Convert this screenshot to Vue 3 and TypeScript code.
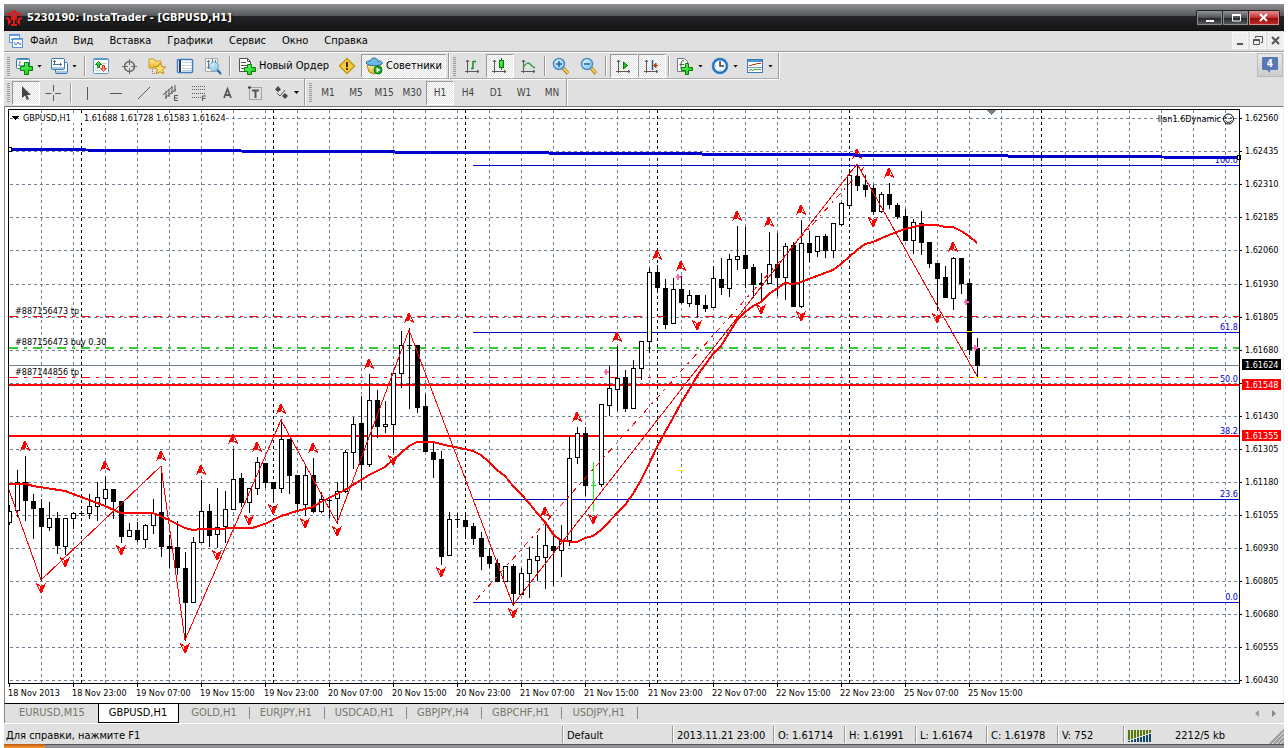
<script setup lang="ts">
type Kind = 'w' | 'b' | 'd'
type Candle = [high: number, low: number, top: number, bottom: number, kind: Kind]
interface Tool {
  icon?: string
  text?: string
  label: string
  pressed?: boolean
  menu?: boolean
  sep?: 'narrow' | 'wide'
}

const menus = ['Файл', 'Вид', 'Вставка', 'Графики', 'Сервис', 'Окно', 'Справка']

const mainTools: Tool[] = [
  { icon: 'new-chart', label: 'Новый график', menu: true },
  { icon: 'profiles', label: 'Профили', menu: true },
  { label: '', sep: 'narrow' },
  { icon: 'market', label: 'Обзор рынка' },
  { icon: 'target', label: 'Окно данных' },
  { icon: 'folder', label: 'Навигатор' },
  { icon: 'terminal', label: 'Терминал' },
  { icon: 'tester', label: 'Тестер стратегий' },
  { label: '', sep: 'wide' },
  { icon: 'order', text: 'Новый Ордер', label: 'Новый Ордер' },
  { icon: 'alert', label: 'MetaEditor' },
  { icon: 'expert', text: 'Советники', label: 'Советники', pressed: true },
]
const chartTools: Tool[] = [
  { icon: 'bars', label: 'Бары' },
  { icon: 'candles', label: 'Японские свечи', pressed: true },
  { icon: 'line', label: 'Линия' },
  { label: '', sep: 'narrow' },
  { icon: 'zoom-in', label: 'Увеличить' },
  { icon: 'zoom-out', label: 'Уменьшить' },
  { label: '', sep: 'wide' },
  { icon: 'scroll', label: 'Автопрокрутка', pressed: true },
  { icon: 'shift', label: 'Сдвиг графика', pressed: true },
  { label: '', sep: 'wide' },
  { icon: 'indicator', label: 'Индикаторы', menu: true },
  { icon: 'clock', label: 'Периоды', menu: true },
  { icon: 'template', label: 'Шаблоны', menu: true },
]
const drawTools: Tool[] = [
  { icon: 'cursor', label: 'Курсор', pressed: true },
  { icon: 'cross', label: 'Перекрестие' },
  { label: '', sep: 'narrow' },
  { icon: 'vline', label: 'Вертикальная линия' },
  { icon: 'hline', label: 'Горизонтальная линия' },
  { icon: 'trend', label: 'Трендовая линия' },
  { icon: 'channel', label: 'Канал' },
  { icon: 'fibo', label: 'Фибоначчи' },
  { icon: 'text', label: 'Текст' },
  { icon: 'label', label: 'Метка' },
  { icon: 'arrows', label: 'Стрелки', menu: true },
]
const frames = ['M1', 'M5', 'M15', 'M30', 'H1', 'H4', 'D1', 'W1', 'MN']
const tabs = ['EURUSD,M15', 'GBPUSD,H1', 'GOLD,H1', 'EURJPY,H1', 'USDCAD,H1', 'GBPJPY,H4', 'GBPCHF,H1', 'USDJPY,H1']

const candles: Candle[] = [
  [505, 524, 511, 522, 'w'], [470, 516, 482, 510, 'w'], [456, 520, 482, 500, 'b'], [494, 538, 501, 508, 'b'],
  [499, 580, 508, 526, 'b'], [502, 530, 518, 527, 'w'], [512, 553, 518, 545, 'b'], [518, 554, 518, 546, 'w'],
  [512, 528, 513, 518, 'w'], [511, 515, 513, 513, 'd'], [494, 518, 506, 513, 'w'], [482, 520, 497, 506, 'w'],
  [476, 506, 489, 498, 'w'], [489, 518, 489, 501, 'b'], [501, 542, 501, 536, 'b'], [523, 536, 530, 536, 'w'],
  [522, 541, 530, 539, 'b'], [524, 547, 525, 539, 'w'], [499, 533, 513, 525, 'w'], [466, 556, 512, 546, 'b'],
  [535, 567, 546, 548, 'b'], [521, 574, 547, 567, 'b'], [552, 640, 568, 602, 'b'], [537, 602, 542, 602, 'w'],
  [480, 542, 511, 542, 'w'], [504, 546, 511, 535, 'b'], [488, 547, 527, 534, 'w'], [491, 542, 509, 526, 'w'],
  [449, 509, 479, 509, 'w'], [473, 506, 478, 502, 'b'], [488, 512, 488, 502, 'w'], [457, 494, 462, 488, 'w'],
  [463, 487, 463, 482, 'b'], [482, 501, 482, 488, 'b'], [419, 492, 439, 488, 'w'], [439, 493, 439, 475, 'b'],
  [475, 511, 475, 503, 'b'], [466, 515, 475, 504, 'w'], [458, 512, 475, 511, 'b'], [492, 512, 499, 511, 'w'],
  [497, 517, 500, 500, 'd'], [482, 523, 491, 498, 'w'], [450, 492, 452, 491, 'w'], [417, 468, 424, 452, 'w'],
  [396, 489, 423, 464, 'b'], [374, 466, 400, 464, 'w'], [390, 437, 400, 426, 'b'], [401, 432, 424, 426, 'w'],
  [370, 452, 373, 424, 'w'], [331, 387, 345, 373, 'w'], [328, 408, 345, 345, 'd'], [345, 412, 345, 407, 'b'],
  [394, 451, 406, 451, 'b'], [442, 477, 452, 459, 'b'], [451, 564, 459, 556, 'b'], [512, 555, 519, 555, 'w'],
  [513, 527, 519, 519, 'd'], [512, 538, 520, 526, 'b'], [523, 544, 526, 538, 'b'], [532, 569, 538, 556, 'b'],
  [548, 567, 556, 563, 'b'], [559, 581, 563, 581, 'b'], [566, 581, 566, 581, 'w'], [564, 605, 566, 593, 'b'],
  [568, 594, 573, 594, 'w'], [547, 597, 559, 573, 'w'], [535, 580, 556, 560, 'w'], [522, 588, 545, 557, 'w'],
  [534, 585, 546, 550, 'b'], [525, 576, 540, 550, 'w'], [436, 545, 458, 540, 'w'], [427, 463, 433, 457, 'w'],
  [427, 495, 433, 485, 'b'], [485, 485, 485, 485, 'd'], [404, 486, 404, 484, 'w'], [366, 415, 388, 405, 'w'],
  [346, 410, 378, 389, 'w'], [370, 411, 377, 408, 'b'], [360, 408, 368, 408, 'w'], [341, 379, 341, 368, 'w'],
  [268, 352, 272, 341, 'w'], [265, 292, 272, 287, 'b'], [279, 328, 288, 324, 'b'], [278, 323, 289, 323, 'w'],
  [276, 303, 289, 302, 'b'], [290, 306, 295, 303, 'w'], [295, 317, 295, 304, 'b'], [295, 311, 305, 308, 'b'],
  [266, 307, 278, 307, 'w'], [258, 294, 279, 287, 'b'], [254, 296, 259, 288, 'w'], [226, 269, 256, 259, 'w'],
  [227, 287, 255, 268, 'b'], [264, 297, 267, 284, 'b'], [273, 301, 283, 284, 'b'], [232, 283, 264, 283, 'w'],
  [233, 295, 264, 277, 'b'], [243, 299, 246, 277, 'w'], [242, 306, 245, 306, 'b'], [220, 307, 243, 306, 'w'],
  [231, 261, 243, 252, 'b'], [236, 256, 236, 251, 'w'], [234, 257, 236, 250, 'b'], [223, 257, 223, 250, 'w'],
  [202, 225, 203, 224, 'w'], [169, 206, 175, 205, 'w'], [164, 190, 176, 185, 'b'], [175, 196, 185, 189, 'b'],
  [185, 214, 188, 211, 'b'], [192, 212, 194, 211, 'w'], [183, 208, 194, 204, 'b'], [203, 218, 205, 216, 'b'],
  [209, 240, 216, 240, 'b'], [219, 253, 222, 240, 'w'], [211, 254, 223, 242, 'b'], [242, 267, 242, 263, 'b'],
  [263, 310, 263, 278, 'b'], [266, 297, 277, 297, 'b'], [257, 309, 258, 298, 'w'], [258, 293, 258, 283, 'b'],
  [279, 354, 283, 349, 'b'], [338, 376, 348, 365, 'b'],
]

const average =
  '9,484 27,484 33,486 65,491 81,497 105,506 121,513 153,513 169,520 185,528 193,530 201,529 252,528 265,524 281,516 297,511 313,507 321,502 337,494 345,490 369,475 385,467 401,453 409,446 417,442 433,442 449,446 465,449 473,451 481,455 489,462 497,470 505,476 513,486 521,494 529,503 537,513 545,522 553,534 561,541 577,542 585,538 593,536 601,530 625,505 633,494 641,480 649,464 657,447 665,432 673,418 681,403 689,390 697,376 705,365 713,354 721,346 729,333 737,320 745,312 753,306 761,302 769,294 785,283 793,284 801,282 817,276 833,270 841,264 857,250 865,244 873,242 889,235 905,229 921,225 937,225 945,227 953,227 961,231 969,236 977,243'
const zigzag = '9,490 41,580 161,466 185,640 281,420 337,523 409,330 513,605 857,164 977,376'

const upMarks: [number, number][] = [
  [25, 446], [105, 466], [161, 456], [201, 470], [233, 439], [257, 447], [281, 409], [313, 448], [369, 364],
  [409, 318], [545, 512], [577, 417], [617, 337], [657, 255], [681, 266], [737, 216], [769, 222], [801, 210],
  [857, 154], [889, 173], [953, 247],
]
const downMarks: [number, number][] = [
  [41, 588], [65, 562], [121, 550], [185, 648], [217, 555], [249, 520], [273, 509], [305, 523], [337, 531],
  [393, 460], [441, 572], [513, 613], [593, 519], [697, 325], [761, 309], [801, 316], [873, 222], [937, 318],
]
const trades: [number, number][] = [[606, 372], [678, 277], [966, 302], [975, 348]]

const gridX = Array.from({ length: 38 }, (_, i) => 41 + 32 * i)
const days = [81, 273, 465, 657, 849, 1041]
const prices: [number, string][] = [
  [118, '1.62560'], [151, '1.62435'], [184, '1.62310'], [217, '1.62185'], [250, '1.62060'], [284, '1.61930'],
  [317, '1.61805'], [350, '1.61680'], [383, ''], [416, '1.61430'], [449, '1.61305'], [482, '1.61180'],
  [515, '1.61055'], [548, '1.60930'], [581, '1.60805'], [614, '1.60680'], [647, '1.60555'], [680, '1.60430'],
]
const times = [
  '18 Nov 2013', '18 Nov 23:00', '19 Nov 07:00', '19 Nov 15:00', '19 Nov 23:00', '20 Nov 07:00', '20 Nov 15:00',
  '20 Nov 23:00', '21 Nov 07:00', '21 Nov 15:00', '21 Nov 23:00', '22 Nov 07:00', '22 Nov 15:00', '22 Nov 23:00',
  '25 Nov 07:00', '25 Nov 15:00',
]
const fibs: [number, string][] = [[165, '100.0'], [332, '61.8'], [384, '50.0'], [436, '38.2'], [499, '23.6'], [602, '0.0']]
const orders: [number, string][] = [[314, '#887156473 tp'], [345, '#887156473 buy 0.30'], [375, '#887144856 tp']]
const quotes = ['O: 1.61714', 'H: 1.61991', 'L: 1.61674', 'C: 1.61978']
</script>

<template>
  <div class="window">
    <svg class="defs" aria-hidden="true">
      <defs>
        <linearGradient id="lens" x1="0" y1="0" x2="1" y2="1"><stop offset="0" stop-color="#eefaff" /><stop offset="1" stop-color="#74c2ee" /></linearGradient>
        <linearGradient id="leaf" x1="0" y1="0" x2="1" y2="1"><stop offset="0" stop-color="#6dff6d" /><stop offset="1" stop-color="#10c010" /></linearGradient>
        <linearGradient id="gold" x1="0" y1="0" x2="0" y2="1"><stop offset="0" stop-color="#fff0a0" /><stop offset="1" stop-color="#e8b020" /></linearGradient>
      </defs>
      <symbol id="new-chart" viewBox="0 0 18 18">
        <rect x="1.500" y="1.500" width="13" height="10" rx="1" fill="#fff" stroke="#3c78b4" />
        <path d="M2 2.500h12" stroke="#5a9ad4" /><path d="M4.500 4v5M3 8.500h6M4 5.500h2" stroke="#6a9cc8" fill="none" />
        <path d="M9.500 5.500h4v4h4v4h-4v4h-4v-4h-4v-4h4z" fill="url(#leaf)" stroke="#087808" />
      </symbol>
      <symbol id="profiles" viewBox="0 0 18 18">
        <rect x="5.500" y="5.500" width="12" height="11" rx="1" fill="#fff" stroke="#3c78b4" /><path d="M6 15h11" stroke="#a6c8e6" stroke-width="2" />
        <rect x="1.500" y="1.500" width="13" height="11" rx="1" fill="#fff" stroke="#3c78b4" /><path d="M2 11h12" stroke="#a6c8e6" stroke-width="2" />
        <path d="M4.500 3v5M3 4.500h3M3 7.500h9M10.500 6v3" stroke="#4d7095" fill="none" />
      </symbol>
      <symbol id="market" viewBox="0 0 18 18">
        <rect x="1.500" y="1.500" width="15" height="15" rx="1" fill="#fff" stroke="#5a9ad4" /><path d="M2 2.500h14" stroke="#5a9ad4" />
        <path d="M3 11.500h3M10 6.500h5M3 13.500h5" stroke="#c8d4e0" />
        <path d="M6.500 4.500l3 3h-2v3h-2v-3h-2z" fill="url(#leaf)" stroke="#087808" />
        <path d="M11.500 14.500l3-3h-2v-3h-2v3h-2z" fill="#f8a080" stroke="#c83c18" />
      </symbol>
      <symbol id="target" viewBox="0 0 18 18">
        <circle cx="9.500" cy="9.500" r="5" fill="none" stroke="#686868" stroke-width="1.500" /><path d="M9.500 2v6M9.500 11v6M2 9.500h6M11 9.500h6" stroke="#686868" />
      </symbol>
      <symbol id="folder" viewBox="0 0 18 18">
        <path d="M1 2h5l1 2h6v7H1z" fill="url(#gold)" stroke="#c89a28" />
        <path d="M4.500 12v4.500H8" fill="none" stroke="#777" stroke-dasharray="1 1" />
        <path d="M12 6l1.700 3.500 4 .5-3 2.600.9 4.200L12 14.700l-3.600 2.100.9-4.200-3-2.600 4-.5z" fill="#ffe070" stroke="#c08818" />
      </symbol>
      <symbol id="terminal" viewBox="0 0 18 18">
        <rect x="1.500" y="2.500" width="15" height="13" rx="1" fill="#fff" stroke="#3c7cc0" stroke-width="1.500" /><path d="M4 3v12" stroke="#2a3a50" stroke-width="2" />
        <path d="M6 5.500h9M6 8.500h9M6 11.500h9" stroke="#c0cfe0" /><path d="M6 13.500h10" stroke="#a9cef0" />
      </symbol>
      <symbol id="tester" viewBox="0 0 18 18">
        <path d="M1.500 1.500h12v13h-12z" fill="#f4f4ee" stroke="#aaa" /><path d="M4.500 3v9M8.500 2v5M11.500 3v6M3 10.500h8M3 4.500h3" stroke="#6a7888" />
        <circle cx="10" cy="9.500" r="4.500" fill="url(#lens)" fill-opacity=".85" stroke="#6ea0c8" /><path d="M13.500 13l3.500 4" stroke="#2468b0" stroke-width="2" />
      </symbol>
      <symbol id="order" viewBox="0 0 18 18">
        <path d="M1.500 1.500h8l3 3v10h-11z" fill="#fff" stroke="#555" /><path d="M9.500 1.500v3h3M3 5.500h5M3 8.500h7M3 11.500h4" stroke="#555" fill="none" />
        <path d="M9.500 7.500h4v3h4v4h-4v3h-4v-3h-3v-4h3z" fill="url(#leaf)" stroke="#087808" />
      </symbol>
      <symbol id="alert" viewBox="0 0 18 18">
        <path d="M9 1.500L16.500 9 9 16.500 1.500 9z" fill="#f8cc38" stroke="#c49818" stroke-width="1.500" /><path d="M9 5v5M9 11v2" stroke="#403000" stroke-width="2" />
      </symbol>
      <symbol id="expert" viewBox="0 0 18 18">
        <path d="M2 8h13l-1 6-5 3-5-2z" fill="url(#gold)" stroke="#b88a18" />
        <path d="M1 6c0-2 3-2 4-2 1-4 7-4 8 0 3 0 5 1 4 3-3 2-13 3-16-1z" fill="#6ab8e6" stroke="#286c9c" />
        <circle cx="13" cy="13" r="4" fill="#1aae20" stroke="#087808" /><path d="M11.500 10.500l4 2.500-4 2.500z" fill="#fff" />
      </symbol>
      <symbol id="bars" viewBox="0 0 18 18">
        <path d="M4.500 3v13M2 14.500h14M3 5l1.500-2L6 5M14 13l2 1.500-2 1.500" fill="none" stroke="#585858" /><path d="M10 12V4M8 11.500h2M10 4.500h3" stroke="#168c16" stroke-width="1.500" />
      </symbol>
      <symbol id="candles" viewBox="0 0 18 18">
        <path d="M3.500 3v13M1 14.500h14M2 5l1.500-2L5 5M13 13l2 1.500-2 1.500" fill="none" stroke="#585858" /><path d="M10.500 1v12" stroke="#087808" /><rect x="8.500" y="3.500" width="4" height="7" fill="url(#leaf)" stroke="#087808" />
      </symbol>
      <symbol id="line" viewBox="0 0 18 18">
        <path d="M4.500 3v13M2 14.500h14M3 5l1.500-2L6 5M14 13l2 1.500-2 1.500" fill="none" stroke="#585858" /><path d="M4 11c4-7 6-5 8-3s3 2 4 3" fill="none" stroke="#30a040" stroke-width="1.500" />
      </symbol>
      <symbol id="zoom-in" viewBox="0 0 18 18">
        <path d="M11 11l5 5.500" stroke="#a87810" stroke-width="3.500" /><path d="M11 11l5 5" stroke="#f4d060" stroke-width="2" />
        <circle cx="7" cy="7" r="5.500" fill="url(#lens)" stroke="#4a8cc8" stroke-width="1.500" /><path d="M4 7h6M7 4v6" stroke="#286098" stroke-width="1.500" />
      </symbol>
      <symbol id="zoom-out" viewBox="0 0 18 18">
        <path d="M11 11l5 5.500" stroke="#a87810" stroke-width="3.500" /><path d="M11 11l5 5" stroke="#f4d060" stroke-width="2" />
        <circle cx="7" cy="7" r="5.500" fill="url(#lens)" stroke="#4a8cc8" stroke-width="1.500" /><path d="M4 7h6" stroke="#286098" stroke-width="1.500" />
      </symbol>
      <symbol id="scroll" viewBox="0 0 18 18">
        <path d="M3.500 3v13M1 14.500h14M2 5l1.500-2L5 5M13 13l2 1.500-2 1.500" fill="none" stroke="#585858" /><path d="M8.500 5l4 3.500-4 3.500z" fill="#28c028" stroke="#087808" />
      </symbol>
      <symbol id="shift" viewBox="0 0 18 18">
        <path d="M3.500 3v13M1 14.500h14M2 5l1.500-2L5 5M13 13l2 1.500-2 1.500" fill="none" stroke="#585858" /><path d="M9.500 3v10" stroke="#1c5c94" stroke-width="1.500" /><path d="M15 8.500h-4M13 6l-2.500 2.500L13 11z" stroke="#b83c10" fill="#d85020" />
      </symbol>
      <symbol id="indicator" viewBox="0 0 18 18">
        <path d="M1.500 1.500h7l3 3v10h-10z" fill="#fff" stroke="#777" /><path d="M8 4c-3-1-3 1-3 8M3.500 7.500H8" stroke="#555" fill="none" />
        <path d="M9.500 6.500h3v4h4v3h-4v4h-3v-4h-4v-3h4z" fill="url(#leaf)" stroke="#087808" />
      </symbol>
      <symbol id="clock" viewBox="0 0 18 18">
        <circle cx="9" cy="9" r="7" fill="#f4faff" stroke="#1c64b4" stroke-width="2.500" /><circle cx="9" cy="9" r="7.500" fill="none" stroke="#4090e0" /><path d="M9 4v5h4" fill="none" stroke="#345" stroke-width="1.500" /><path d="M9 13v1M4 9h1" stroke="#789" />
      </symbol>
      <symbol id="template" viewBox="0 0 18 18">
        <rect x="1.500" y="2.500" width="15" height="13" fill="#fff" stroke="#3c78b4" /><path d="M2 4h14" stroke="#4c94d8" stroke-width="2" /><path d="M2 10.500h14" stroke="#7ca8d0" />
        <path d="M3 8.500h2l2-1h2l2-1h4" stroke="#b03820" fill="none" /><path d="M3 13.500l2-1 2 1 2-1.500 2 1 2-1 2 1" stroke="#28a038" fill="none" />
      </symbol>
      <symbol id="cursor" viewBox="0 0 18 18"><path d="M5 2v12l3-2.500 2 4.500 2-1-2-4h4z" fill="#444" /></symbol>
      <symbol id="cross" viewBox="0 0 18 18"><path d="M8.500 1v6.500M8.500 11v6M.5 9.500h6M10 9.500h6" stroke="#585858" /></symbol>
      <symbol id="vline" viewBox="0 0 18 18"><path d="M9.500 3v13" stroke="#585858" /></symbol>
      <symbol id="hline" viewBox="0 0 18 18"><path d="M4 9.500h12" stroke="#585858" /></symbol>
      <symbol id="trend" viewBox="0 0 18 18"><path d="M4 15L16 3" stroke="#585858" /></symbol>
      <symbol id="channel" viewBox="0 0 18 18"><path d="M1 11l9-8M3 14l11-9M4 7v8M7 5v8M10 2v8M13 1v7" stroke="#555" /><path d="M16 11.500h-3.500v5H16M12 14h3.500" fill="none" stroke="#555" /></symbol>
      <symbol id="fibo" viewBox="0 0 18 18"><path d="M2 2.500h13M2 5.500h13M2 9.500h13M2 13.500h9" stroke="#555" stroke-dasharray="1 1" /><path d="M12.500 17v-5H16M12 14.500h3.500" fill="none" stroke="#555" /></symbol>
      <symbol id="text" viewBox="0 0 18 18"><path d="M6 14l3.500-9 3.500 9M7 11h5" fill="none" stroke="#585858" stroke-width="1.800" /></symbol>
      <symbol id="label" viewBox="0 0 18 18"><rect x="3.500" y="3.500" width="12" height="12" fill="none" stroke="#666" stroke-dasharray="1 1" /><path d="M2 3.500h3" stroke="#444" stroke-width="2" /><path d="M6 6.500h7M9.500 7v7" stroke="#555" stroke-width="2" /></symbol>
      <symbol id="arrows" viewBox="0 0 18 18"><path d="M6 2l3 3.500L6 8 3 5.500z" fill="#484848" /><path d="M5 9l3 3 5-6" fill="none" stroke="#555" /><path d="M13 9l3 3-3 3-3-3z" fill="#484848" /></symbol>
      <symbol id="mark" viewBox="-6 -6 12 12" overflow="visible"><path d="M-1-5H1V2L-2 3l-3 2 2-5z" fill="red" /><path d="M0-5L5 5M0 1l5 4" stroke="red" fill="none" /></symbol>
    </svg>

    <header class="title-bar">
      <svg class="brand" viewBox="0 0 18 18" width="18" height="18" aria-hidden="true">
        <circle cx="9" cy="3" r="2" fill="#e01818" />
        <path d="M9 6v11M6 16h6M2 6l3-2 2 3v4M16 6l-3-2-2 3v4M1 9l3 1v4l2-2M17 9l-3 1v4l-2-2" stroke="#e01818" stroke-width="2" fill="none" />
      </svg>
      <h1>5230190: InstaTrader - [GBPUSD,H1]</h1>
      <div class="win-buttons">
        <button type="button" aria-label="Свернуть"><svg width="12" height="12"><path d="M2 9h8" stroke="#fff" stroke-width="2" /></svg></button>
        <button type="button" aria-label="Развернуть"><svg width="12" height="12"><path d="M2.500 3h8v6h-8z" fill="none" stroke="#fff" /><path d="M2 3h9" stroke="#fff" stroke-width="2" /></svg></button>
        <button type="button" class="close" aria-label="Закрыть"><svg width="12" height="12"><path d="M2 2l7 7M9 2l-7 7" stroke="#fff" stroke-width="2" /></svg></button>
      </div>
    </header>

    <nav class="menu-bar">
      <svg class="doc-icon" width="16" height="16" viewBox="0 0 16 16" aria-hidden="true">
        <rect x="1.500" y="1.500" width="10" height="8" fill="#fff" stroke="#5a96e0" /><path d="M2 2.500h9" stroke="#6aa4e4" /><path d="M3 7l2-2 1 2 2-2" fill="none" stroke="#4878b0" />
        <rect x="4.500" y="5.500" width="10" height="9" fill="#fff" stroke="#5a96e0" /><path d="M5 6.500h9" stroke="#6aa4e4" /><path d="M6 9l2 3 2-3 2 3 1-2" fill="none" stroke="#4878b0" />
      </svg>
      <button v-for="m in menus" :key="m" type="button">{{ m }}</button>
      <div class="mdi">
        <button type="button" aria-label="Свернуть окно"><svg width="12" height="12"><path d="M3 9h6" stroke="#555" stroke-width="2" /></svg></button>
        <button type="button" aria-label="Восстановить окно"><svg width="12" height="12"><path d="M3.500 3V1.500h7v6H9" fill="none" stroke="#555" /><path d="M1.500 4.500h6v5h-6zM1.500 5.500h6" fill="none" stroke="#555" /></svg></button>
        <button type="button" aria-label="Закрыть окно"><svg width="12" height="12"><path d="M2 2l7 7M9 2l-7 7" stroke="#555" stroke-width="2" /></svg></button>
      </div>
    </nav>

    <div class="tool-row upper">
      <div v-for="(group, g) in [mainTools, chartTools]" :key="g" class="tool-group" role="toolbar">
        <span class="grip"></span>
        <template v-for="(t, i) in group" :key="i">
          <span v-if="t.sep" class="sep" :class="t.sep"></span>
          <button v-else type="button" class="tool" :class="{ pressed: t.pressed, drop: t.menu, wordy: t.text }" :aria-label="t.label">
            <svg width="18" height="18" aria-hidden="true"><use :href="'#' + t.icon" /></svg>
            <span v-if="t.text">{{ t.text }}</span>
            <i v-if="t.menu" class="caret"></i>
          </button>
        </template>
      </div>
      <button type="button" class="notice" aria-label="Сообщения">
        <span>4</span>
      </button>
    </div>

    <div class="tool-row lower">
      <div class="tool-group" role="toolbar">
        <span class="grip"></span>
        <template v-for="(t, i) in drawTools" :key="i">
          <span v-if="t.sep" class="sep" :class="t.sep"></span>
          <button v-else type="button" class="tool" :class="{ pressed: t.pressed, drop: t.menu }" :aria-label="t.label">
            <svg width="18" height="18" aria-hidden="true"><use :href="'#' + t.icon" /></svg>
            <i v-if="t.menu" class="caret"></i>
          </button>
        </template>
      </div>
      <div class="tool-group" role="toolbar">
        <span class="grip"></span>
        <button v-for="f in frames" :key="f" type="button" class="tool frame" :class="{ pressed: f === 'H1' }">{{ f }}</button>
      </div>
    </div>

    <main class="chart">
      <svg viewBox="5 107 1278 595" role="img" aria-label="GBPUSD,H1" shape-rendering="crispEdges">
        <defs><clipPath id="plot"><rect x="9" y="110" width="1230" height="573" /></clipPath></defs>
        <g clip-path="url(#plot)">
          <g stroke="#708090" stroke-dasharray="3 3">
            <path v-for="x in gridX" :key="x" :d="`M${x}.5 110V683`" />
            <path v-for="p in prices" :key="p[0]" :d="`M10 ${p[0]}.5H1239`" />
          </g>
          <path v-for="x in days" :key="x" :d="`M${x}.5 110V683`" stroke="#000" stroke-dasharray="3 3" />
          <path d="M9 365.5H1239" stroke="#708090" />
          <g stroke-dasharray="9 6 3 6">
            <path d="M9 316.5H1239M9 377.5H1239" stroke="red" />
            <path d="M9 348H1239" stroke="#32cd32" stroke-width="2" />
          </g>
          <path d="M473 165.500H1239M473 332.500H1239M473 499.500H1239M473 602.500H1239" stroke="#0000cd" />
          <path d="M9 385H1239M9 436H1239" stroke="red" stroke-width="2" />
          <g v-for="(c, i) in candles" :key="i" stroke="#000">
            <path :d="`M${9 + 8 * i}.5 ${c[0]}V${c[1] + 1}`" />
            <path v-if="c[4] === 'd'" :d="`M${7 + 8 * i} ${c[2]}.5h5`" />
            <rect v-else :x="7.5 + 8 * i" :y="c[2] + 0.5" width="4" :height="c[3] - c[2]" :fill="c[4] === 'w' ? '#fff' : '#000'" />
          </g>
          <path d="M593.500 462V511M591 485.500h5" stroke="#0f0" />
          <polyline :points="average" fill="none" stroke="red" stroke-width="2" />
          <polyline :points="zigzag" fill="none" stroke="red" />
          <path d="M476 600L865 166" stroke="red" stroke-dasharray="6 5 2 5" />
          <use v-for="(m, i) in upMarks" :key="'u' + i" href="#mark" x="-6" y="-6" width="12" height="12" :transform="`translate(${m[0]} ${m[1]})`" />
          <use v-for="(m, i) in downMarks" :key="'d' + i" href="#mark" x="-6" y="-6" width="12" height="12" :transform="`translate(${m[0]} ${m[1]}) rotate(180)`" />
          <path v-for="(t, i) in trades" :key="'t' + i" :d="`M${t[0] - 2} ${t[1]}h5M${t[0]} ${t[1] - 3}v6`" stroke="#ff69b4" stroke-width="2" />
          <path d="M678 470.500h7M966 331.500h7M974 377.500h7" stroke="#ff0" />
          <path d="M986 110h11l-5.500 5z" fill="#708090" />
        </g>

        <path d="M1218 322h21v9h-21zM1218 374h21v9h-21zM1218 426h21v8h-21zM1218 489h21v9h-21zM1224 592h15v9h-15z" fill="#fff" />
        <g class="small fib">
          <text v-for="f in fibs" :key="f[1]" x="1238" :y="f[0] - 2" text-anchor="end">{{ f[1] }}</text>
        </g>
        <path d="M9 149.500L1239 157.500" stroke="#0000cd" stroke-width="3" />
        <path d="M8.500 147.500h3v4h-3zM1237.500 155.500h3v4h-3z" fill="#fff" stroke="#000" />

        <path d="M22 113h204v10H22z" fill="#fff" />
        <g class="small">
          <text v-for="o in orders" :key="o[1]" x="15" :y="o[0]">{{ o[1] }}</text>
          <path d="M12 116h7l-3.500 4z" />
          <text x="23" y="121">GBPUSD,H1</text>
          <text x="84" y="121">1.61688 1.61728 1.61583 1.61624</text>
          <text x="1221" y="122" text-anchor="end">Ilan1.6Dynamic</text>
        </g>
        <g fill="none" stroke="#000" shape-rendering="auto"><circle cx="1228.500" cy="119" r="5" /><path d="M1226 117v2M1231 117v2M1225.500 120.500c1 2.500 5 2.500 6 0" /></g>

        <path d="M8.500 683V109.500H1239.500V683.500H8" fill="none" stroke="#000" />
        <path v-for="p in prices" :key="p[0]" :d="`M1240 ${p[0]}.5h2`" stroke="#000" />
        <path v-for="(t, i) in times" :key="t" :d="`M${9 + 64 * i}.5 684v3`" stroke="#000" />
        <g class="small">
          <text v-for="p in prices" :key="p[0]" x="1245" :y="p[0] + 3">{{ p[1] }}</text>
          <text v-for="(t, i) in times" :key="t" :x="8 + 64 * i" y="696">{{ t }}</text>
        </g>
        <path d="M1242 359h39v11h-39z" />
        <path d="M1242 379h39v11h-39zM1242 430h39v11h-39z" fill="red" />
        <g class="small tag"><text x="1245" y="368">1.61624</text><text x="1245" y="388">1.61548</text><text x="1245" y="439">1.61355</text></g>
      </svg>
    </main>

    <nav class="tabs">
      <button v-for="t in tabs" :key="t" type="button" :class="{ active: t === 'GBPUSD,H1' }">{{ t }}</button>
      <div class="pager">
        <button type="button" aria-label="Назад"><svg width="6" height="8"><path d="M5 0v7L1 3.500z" fill="#999" /></svg></button>
        <button type="button" aria-label="Вперёд"><svg width="6" height="8"><path d="M1 0v7l4-3.500z" fill="#888" /></svg></button>
      </div>
    </nav>

    <footer class="status">
      <span class="help">Для справки, нажмите F1</span>
      <span class="profile">Default</span>
      <span class="date">2013.11.21 23:00</span>
      <span v-for="q in quotes" :key="q" class="quote">{{ q }}</span>
      <span class="volume">V: 752</span>
      <span class="link">
        <svg width="24" height="12" aria-hidden="true"><path v-for="i in 8" :key="i" :d="`M${3 * i - 2} 0V${11 - i}`" stroke="#557a08" stroke-width="2" /><path v-for="i in 8" :key="'b' + i" :d="`M${3 * i - 2} 12V${12 - i}`" stroke="#0c4868" stroke-width="2" /></svg>
        2212/5 kb
      </span>
      <svg class="resize" width="15" height="15" aria-hidden="true"><path d="M1 15L15 1M5 15L15 5M9 15l6-6M13 15l2-2" stroke="#999" stroke-width="2" /></svg>
    </footer>
    <div class="edge"><span></span></div>
  </div>
</template>

<style>
body { margin: 0; background: #fff; }
</style>

<style scoped>
.window { padding: 4px 4px 0; font: 11px/14px "DejaVu Sans Condensed", "DejaVu Sans", sans-serif; color: #000; }
.window * { box-sizing: border-box; }
.defs { position: absolute; width: 0; height: 0; }
button { font: inherit; color: inherit; border: 0; padding: 0; margin: 0; background: none; display: flex; align-items: center; justify-content: center; white-space: nowrap; }

.title-bar { height: 27px; display: flex; align-items: center; gap: 4px; padding-left: 1px; background: linear-gradient(#8d8f92 0, #55575a 12px, #232426 12px, #161618 26px, #000 27px); }
.title-bar h1 { margin: 0; color: #fff; font-family: "DejaVu Sans Condensed", "DejaVu Sans", sans-serif; font-size: 11px; font-weight: bold; text-shadow: 1px 1px 1px #000; flex: 1; }
.win-buttons { display: flex; gap: 1px; margin-right: 4px; padding: 1px; background: #202123; border-radius: 2px; }
.win-buttons button { width: 25px; height: 14px; border: 1px solid #8b8c8e; background: linear-gradient(#8b8c90, #4b4c50 50%, #242527 50%, #55575a); }
.win-buttons .close { width: 30px; border-color: #d88; background: linear-gradient(#e08080, #c03030 50%, #900c0c 50%, #c02828); }

.menu-bar { height: 21px; display: flex; align-items: center; background: #e0e0e0; padding: 0 0 1px 4px; border-bottom: 1px solid #989898; }
.menu-bar > button { padding: 0 8px; height: 18px; }
.doc-icon { margin-right: -2px; }
.mdi { margin-left: auto; display: flex; gap: 2px; }
.mdi button { width: 16px; height: 17px; background: #efefef; border: 1px solid #f8f8f8; }

.tool-row { display: flex; background: #e0e0e0; }
.upper { height: 27px; border-top: 1px solid #fff; }
.lower { height: 27px; }
.tool-group { display: flex; align-items: center; border-right: 1px solid #999; border-bottom: 1px solid #aaa; padding: 1px 0 0 3px; box-shadow: 1px 1px #fff; margin-right: 1px; }
.upper .tool-group:first-child { padding-right: 2px; }
.lower .tool-group { border-bottom-color: #e0e0e0; box-shadow: 1px 0 #fff; }
.grip { width: 3px; height: 19px; margin-right: 2px; background: repeating-linear-gradient(#999 0, #999 1px, transparent 1px, transparent 2px); }
.tool { width: 28px; height: 24px; border: 1px solid transparent; flex: none; }
.tool svg { flex: none; }
.tool.drop { width: 35px; justify-content: flex-start; padding-left: 2px; gap: 4px; }
.tool.wordy { width: auto; padding: 0 3px; gap: 3px; }
.tool.pressed { border-color: #999 #fff #fff #999; background: repeating-conic-gradient(#fff 0 25%, #e2e2e2 0 50%) 0 0 / 2px 2px; }
.frame { color: #444; font-size: 10px; }
.caret { width: 5px; height: 3px; background: #000; clip-path: polygon(0 0, 100% 0, 50% 100%); }
.sep { flex: none; height: 20px; width: 5px; background: linear-gradient(90deg, transparent 2px, #999 2px, #999 3px, #fff 3px, #fff 4px, transparent 4px); }
.sep.wide { width: 7px; }
.notice { margin: 0 1px 0 auto; width: 26px; height: 24px; border: 1px solid #bbb; background: linear-gradient(#e8e8e8, #ccc); }
.notice span { width: 16px; height: 13px; margin-bottom: 4px; background: #5878b4; color: #fff; font-size: 10px; line-height: 13px; font-weight: bold; border-radius: 1px; position: relative; }
.notice span::after { content: ""; position: absolute; left: 4px; top: 12px; border-top: 4px solid #5878b4; border-left: 4px solid transparent; }

.chart { background: #fff; border-top: 1px solid #777; border-left: 1px solid #888; border-right: 1px solid #eee; padding-bottom: 1px; }
.chart svg { display: block; width: 100%; height: auto; }
.small { font-size: 9px; fill: #000; }
.fib { fill: #0000cd; }
.tag { fill: #fff; }

.tabs { height: 20px; display: flex; align-items: stretch; background: #e0e0e0; border-top: 1px solid #000; border-left: 1px solid #888; padding-left: 4px; color: #77776c; }
.tabs > button { padding: 0 13px 2px 10px; position: relative; }
.tabs > button:not(.active)::after { content: ""; position: absolute; right: 0; top: 3px; bottom: 4px; width: 1px; background: #888; }
.tabs > button:first-child::after { display: none; }
.tabs .active { background: #fff; color: #000; border: 1px solid #000; border-top: 0; padding: 0 11px 1px 10px; margin-right: 2px; }
.pager { margin-left: auto; display: flex; gap: 11px; margin-right: 7px; }

.status { height: 21px; display: flex; align-items: stretch; background: #e0e0e0; border-top: 1px solid #fff; position: relative; white-space: nowrap; }
.status > span { padding: 2px 0 0 4px; border-left: 1px solid #999; box-shadow: inset 1px 0 #fff; margin: 2px 0 1px; line-height: 16px; }
.status .help { flex: 1; border: 0; padding-left: 2px; box-shadow: none; }
.profile { width: 110px; }
.date { width: 101px; }
.quote { width: 71px; }
.volume { width: 66px; }
.link { width: 161px; display: flex; align-items: center; gap: 23px; }
.resize { position: absolute; right: 0; bottom: 0; }
.edge { height: 4px; background: linear-gradient(#555 1px, #909296 1px); }
.edge span { display: block; width: 41px; height: 4px; background: linear-gradient(#b85810, #ff9a30); }
</style>
